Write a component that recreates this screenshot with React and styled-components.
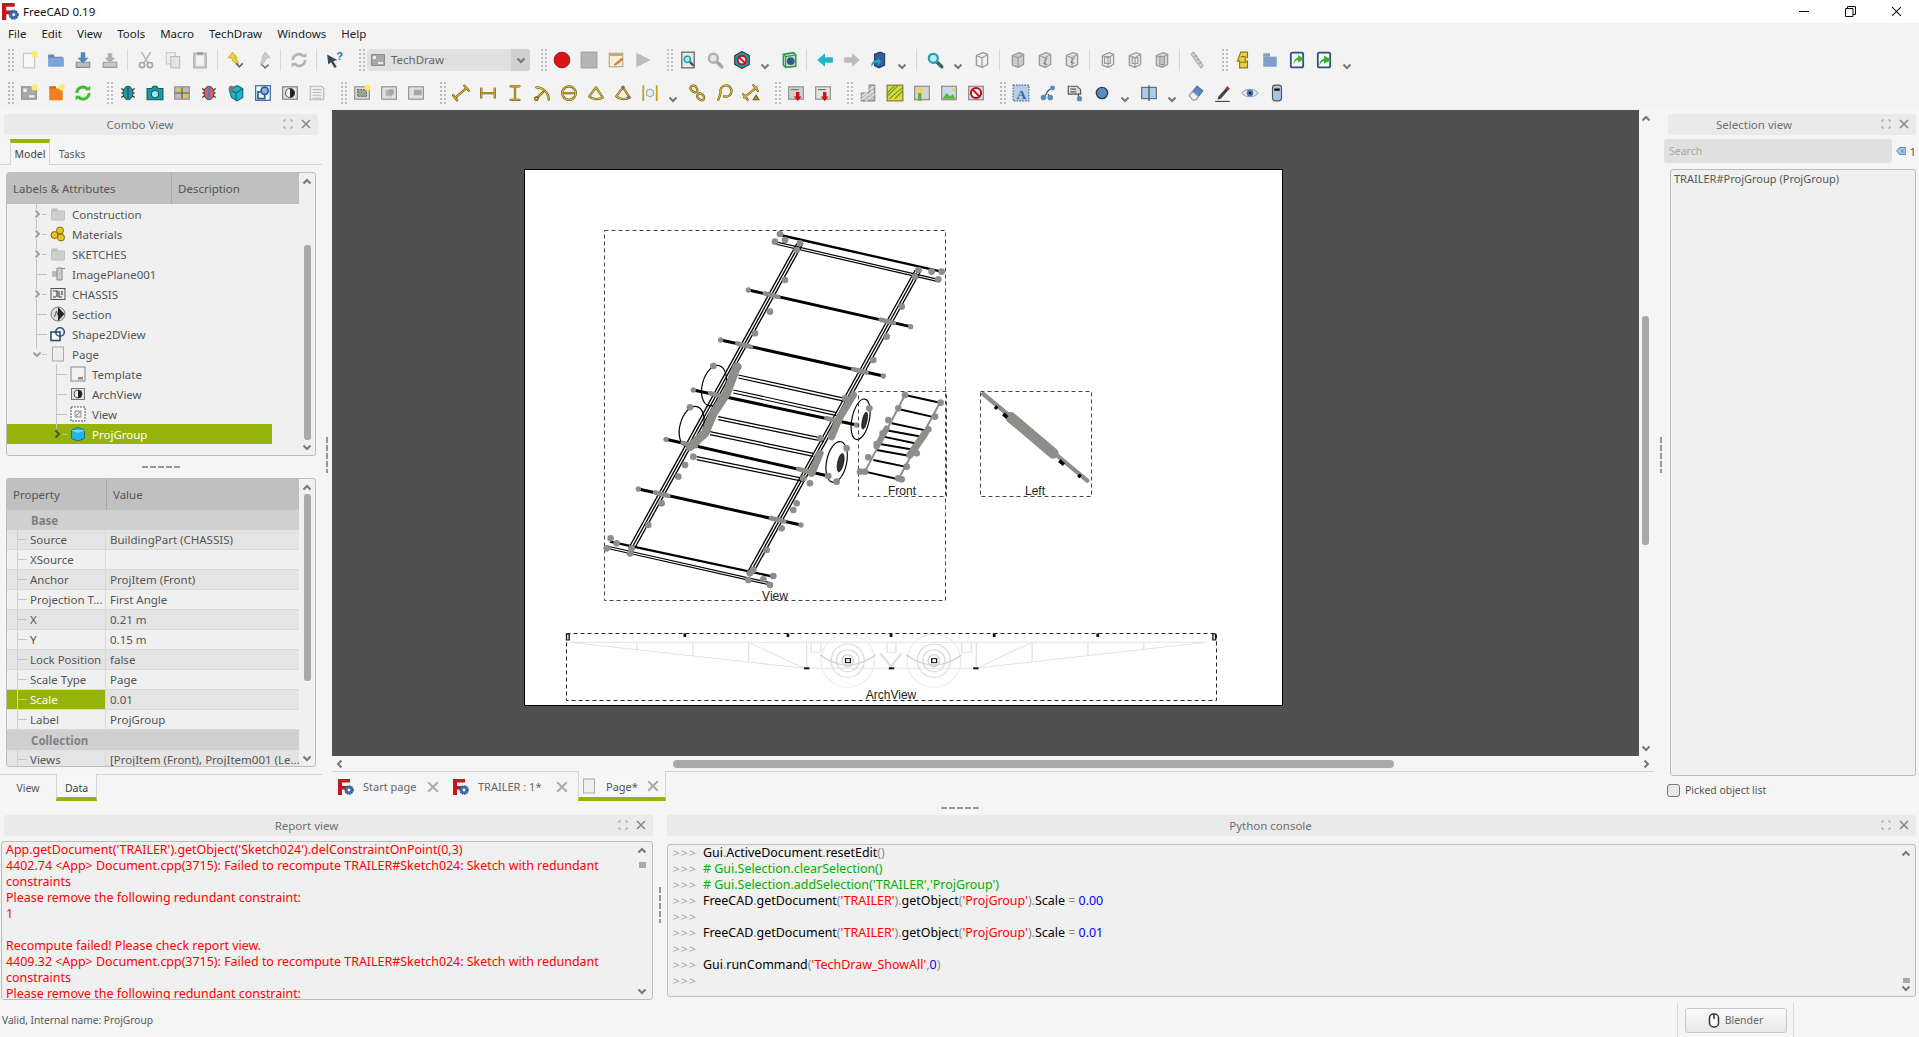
import React from "react";
import styled, { createGlobalStyle } from "styled-components";

const GREEN = "#96b30c";
const UI_FONT = `"Noto Sans", "Open Sans", sans-serif`;

const GlobalStyle = createGlobalStyle`
  html, body { margin: 0; padding: 0; background: #f5f5f5; }
  body { font-family: ${UI_FONT}; font-size: 11.5px; color: #4a4a4a; overflow: hidden; }
  * { box-sizing: border-box; }
`;

// ---- shell

const Shell = styled.div`
  width: 1919px;
  height: 1037px;
  display: flex;
  flex-direction: column;
  overflow: hidden;
  background: #f5f5f5;
`;

const TitleBar = styled.div`
  height: 23px;
  background: #fff;
  display: flex;
  align-items: center;
  padding-left: 2px;
  color: #111;
  font-size: 11.5px;
`;

const TitleText = styled.span`
  margin-left: 4px;
`;

const WinButtons = styled.div`
  margin-left: auto;
  display: flex;
`;

const WinButton = styled.div`
  width: 46px;
  height: 23px;
  display: flex;
  align-items: center;
  justify-content: center;
`;

const MenuBar = styled.div`
  height: 21px;
  background: #f3f3f3;
  display: flex;
  align-items: center;
  gap: 15px;
  padding-left: 8px;
  color: #222;
  font-size: 11.5px;
`;

const ToolRow = styled.div`
  height: 33px;
  background: #f3f3f3;
  display: flex;
  align-items: center;
  padding: 0 0 2px 7px;
`;

const Grip = styled.div`
  width: 8px;
  height: 24px;
  flex: none;
  margin-left: ${(p) => (p.$first ? 0 : "10px")};
  background-image: radial-gradient(circle, #bdbdbd 1.1px, transparent 1.3px);
  background-size: 4px 4px;
`;

const ToolSlot = styled.div`
  width: 27px;
  flex: none;
  display: flex;
  justify-content: center;
  align-items: center;
`;

const ToolSep = styled.div`
  width: 1px;
  height: 22px;
  flex: none;
  margin: 0 4px;
  background: #d6d6d6;
`;

const ToolDrop = styled.div`
  width: 20px;
  flex: none;
  align-self: flex-end;
  padding-bottom: 4px;
  display: flex;
  justify-content: center;
`;

const WorkbenchCombo = styled.div`
  width: 163px;
  height: 22px;
  flex: none;
  margin-left: 1px;
  background: #e0e0e0;
  border-radius: 3px;
  display: flex;
  align-items: center;
  padding-left: 3px;
  color: #666;
  font-size: 11.5px;
  gap: 5px;
`;

const ComboArrow = styled.div`
  margin-left: auto;
  width: 19px;
  height: 22px;
  background: #d0d0d0;
  border-radius: 0 3px 3px 0;
  display: flex;
  align-items: center;
  justify-content: center;
`;

const TopRow = styled.div`
  height: 691px;
  display: flex;
`;

// ---- docks

const LeftDock = styled.div`
  width: 332px;
  flex: none;
  display: flex;
  flex-direction: column;
  position: relative;
`;

const DockTitleBar = styled.div`
  height: 21px;
  flex: none;
  margin: ${(p) => p.$margin || 0};
  padding-right: ${(p) => p.$inset}px;
  background: #eaeaea;
  border-radius: 3px;
  display: flex;
  align-items: center;
  justify-content: center;
  color: #707070;
  position: relative;
`;

const DockIcons = styled.div`
  position: absolute;
  right: 7px;
  top: 5px;
  display: flex;
  gap: 8px;
`;

const TabStrip = styled.div`
  height: ${(p) => p.$h}px;
  flex: none;
  display: flex;
  margin: ${(p) => (p.$bottom ? "7px 10px 0 0" : "0 10px 0 0")};
  padding: ${(p) => (p.$bottom ? "0" : "4px 0 0 10px")};
  border-${(p) => (p.$bottom ? "top" : "bottom")}: 1px solid #d4d4d4;
  font-size: 10.5px;
`;

const SideTab = styled.div`
  width: ${(p) => p.$w}px;
  flex: none;
  display: flex;
  align-items: center;
  justify-content: center;
  color: ${(p) => (p.$active ? "#444" : "#555")};
  ${(p) => p.$active && `
    background: #f6f6f6;
    border-left: 1px solid #d4d4d4;
    border-right: 1px solid #d4d4d4;
    margin-bottom: ${p.$bottom ? 0 : "-1px"};
    margin-top: ${p.$bottom ? "-1px" : 0};
    padding-top: ${p.$bottom ? "4px" : 0};
    border-${p.$bottom ? "bottom" : "top"}: 4px solid ${GREEN};
  `}
  ${(p) => !p.$active && !p.$bottom && "padding-top: 4px;"}
`;

const Panel = styled.div`
  height: ${(p) => p.$h}px;
  flex: none;
  margin: ${(p) => p.$margin};
  display: flex;
  background: #f0f0f0;
  border: 1px solid #bcbcbc;
  border-radius: 3px;
  overflow: hidden;
`;

const PanelBody = styled.div`
  flex: 1;
  min-width: 0;
  overflow: hidden;
`;

const HeaderRow = styled.div`
  height: 31px;
  display: flex;
  background: #c0c0c0;
  color: #555;
`;

const HeaderCell = styled.div`
  width: ${(p) => (p.$w ? `${p.$w}px` : "auto")};
  flex: ${(p) => (p.$w ? "none" : 1)};
  display: flex;
  align-items: center;
  padding-left: 6px;
  border-right: ${(p) => (p.$w ? "1px solid #a9a9a9" : "none")};
`;

const TreeRow = styled.div`
  height: 20px;
  width: 265px;
  display: flex;
  align-items: center;
  gap: 6px;
  position: relative;
  padding-left: ${(p) => p.$pad}px;
  color: ${(p) => (p.$selected ? "#fff" : "#555")};
  background: ${(p) => (p.$selected ? GREEN : "transparent")};
  &::before {
    content: "";
    position: absolute;
    left: ${(p) => p.$line}px;
    top: 0;
    height: ${(p) => (p.$last ? "10px" : "20px")};
    border-left: 1px solid #c4c4c4;
  }
  &::after {
    content: "";
    position: absolute;
    left: ${(p) => p.$line}px;
    top: 10px;
    width: 11px;
    border-top: 1px solid #c4c4c4;
  }
`;

const Expander = styled.div`
  position: absolute;
  left: ${(p) => p.$line - 4}px;
  top: 5px;
  z-index: 1;
  display: flex;
  background: ${(p) => (p.$selected ? GREEN : "#f0f0f0")};
`;

const VScroll = styled.div`
  width: ${(p) => p.$w || 16}px;
  flex: none;
  display: flex;
  flex-direction: column;
  align-items: center;
  padding: 4px 0 3px;
`;

const HScroll = styled.div`
  height: 15px;
  flex: none;
  display: flex;
  align-items: center;
  padding: 0 3px;
`;

const Thumb = styled.div`
  width: ${(p) => p.$w || 7}px;
  height: ${(p) => p.$h}px;
  margin-top: ${(p) => p.$top}px;
  background: #a9a9a9;
  border-radius: ${(p) => (p.$square ? 0 : "3px")};
  flex: none;
`;

const HThumb = styled.div`
  height: 8px;
  width: 721px;
  margin-left: 328px;
  background: #a9a9a9;
  border-radius: 4px;
`;

const ScrollEnd = styled.div`
  margin-${(p) => p.$side || "top"}: auto;
  display: flex;
`;

const SplitterH = styled.div`
  height: ${(p) => p.$h}px;
  flex: none;
  display: flex;
  align-items: center;
  padding-left: ${(p) => p.$pad || 0}px;
`;

const DashH = styled.div`
  width: ${(p) => p.$w}px;
  height: 2px;
  background: repeating-linear-gradient(90deg, #999 0 6px, transparent 6px 8px);
`;

const SplitterV = styled.div`
  width: ${(p) => p.$w}px;
  flex: none;
  display: flex;
  align-items: flex-start;
  justify-content: center;
  padding-top: ${(p) => p.$top || 0}px;
`;

const DashV = styled.div`
  width: 2px;
  height: 36px;
  background: repeating-linear-gradient(180deg, #999 0 6px, transparent 6px 8px);
`;

const LeftSplit = styled.div`
  position: absolute;
  left: 326px;
  top: 327px;
`;

const PropRow = styled.div`
  height: 20px;
  display: grid;
  grid-template-columns: 99px 1fr;
  background: ${(p) => (p.$alt ? "#e4e4e4" : "#f0f0f0")};
  border-bottom: 1px solid #d9d9d9;
  color: #555;
`;

const PropName = styled.div`
  display: flex;
  align-items: center;
  padding-left: 23px;
  white-space: nowrap;
  overflow: hidden;
  border-right: 1px solid #d9d9d9;
  position: relative;
  background: ${(p) => (p.$selected ? GREEN : "transparent")};
  color: ${(p) => (p.$selected ? "#fff" : "inherit")};
  &::before {
    content: "";
    position: absolute;
    left: 10px;
    top: 9px;
    width: 10px;
    border-top: 1px solid #c4c4c4;
  }
  &::after {
    content: "";
    position: absolute;
    left: 10px;
    top: 0;
    height: 20px;
    border-left: 1px solid #d0d0d0;
  }
`;

const PropValue = styled.div`
  display: flex;
  align-items: center;
  padding-left: 4px;
  white-space: nowrap;
  overflow: hidden;
`;

const PropCategory = styled.div`
  height: 20px;
  display: flex;
  align-items: center;
  padding-left: 24px;
  background: #d0d0d0;
  color: #808080;
  font-weight: 700;
`;

// ---- centre

const CenterColumn = styled.div`
  width: 1322px;
  flex: none;
  display: flex;
  flex-direction: column;
`;

const ViewRow = styled.div`
  height: 646px;
  flex: none;
  display: flex;
`;

const Viewport = styled.div`
  width: 1307px;
  flex: none;
  background: #505050;
  padding: 60px 0 0 193px;
`;

const SheetPage = styled.svg`
  display: block;
  width: 757px;
  height: 535px;
  background: #fff;
  box-shadow: 0 0 0 1px #000;
`;

const DocTabs = styled.div`
  height: 30px;
  flex: none;
  display: flex;
  border-top: 1px solid #d4d4d4;
  font-size: 11px;
`;

const DocTab = styled.div`
  width: ${(p) => p.$w}px;
  flex: none;
  display: flex;
  align-items: center;
  padding: 0 ${(p) => p.$right}px 0 ${(p) => p.$left}px;
  color: #666;
  ${(p) => p.$active && `
    background: #f6f6f6;
    border-left: 1px solid #d4d4d4;
    border-right: 1px solid #d4d4d4;
    border-bottom: 4px solid ${GREEN};
    margin-top: -1px;
    padding-top: 4px;
    color: #555;
  `}
`;

const DocTabLabel = styled.span`
  margin-left: ${(p) => p.$gap}px;
`;

const DocTabClose = styled.span`
  margin-left: auto;
  display: flex;
`;

// ---- right dock

const RightDock = styled.div`
  flex: 1;
  min-width: 0;
  display: flex;
  flex-direction: column;
  padding: 4px 3px 0 0;
`;

const SearchRow = styled.div`
  height: 24px;
  flex: none;
  margin: 4px 0 6px -4px;
  display: flex;
  align-items: center;
  overflow: hidden;
`;

const SearchField = styled.div`
  width: 228px;
  height: 24px;
  flex: none;
  background: #e0e0e0;
  border-radius: 3px;
  padding-left: 5px;
  display: flex;
  align-items: center;
  color: #a8a8a8;
  font-size: 10.5px;
`;

const SearchCount = styled.span`
  margin-left: 3px;
  color: #555;
`;

const SelectionList = styled.div`
  height: 607px;
  flex: none;
  margin-left: 2px;
  background: #f0f0f0;
  border: 1px solid #bcbcbc;
  border-radius: 3px;
  padding: 1px 3px;
  color: #555;
  font-size: 11px;
`;

const PickedRow = styled.label`
  display: flex;
  align-items: center;
  gap: 5px;
  margin: 7px 0 0 -1px;
  color: #555;
  font-size: 10.4px;
`;

const CheckBox = styled.span`
  width: 13px;
  height: 13px;
  border: 1px solid #777;
  border-radius: 3px;
  background: #e8e8e8;
`;

// ---- bottom

const BottomRow = styled.div`
  height: 188px;
  flex: none;
  display: flex;
`;

const BottomDock = styled.div`
  flex: none;
  width: ${(p) => p.$w}px;
  display: flex;
  flex-direction: column;
`;

const ConsoleText = styled.div`
  flex: 1;
  min-width: 0;
  padding: ${(p) => p.$pad};
  line-height: 16px;
  font-size: 12.45px;
  overflow: hidden;
  color: ${(p) => p.$color || "#000"};
`;

const ConsoleLine = styled.div`
  height: 16px;
  white-space: nowrap;
  display: flex;
`;

const Prompt = styled.span`
  width: 30px;
  flex: none;
  color: #a0a0a0;
  font-size: 11.5px;
  letter-spacing: 1.5px;
`;

const Tok = styled.span`
  white-space: pre;
  color: ${(p) => ({ s: "#f00", c: "#00b000", n: "#00f", p: "#8a8a8a" }[p.$t] || "#000")};
`;

const StatusBar = styled.div`
  height: 34px;
  flex: none;
  display: flex;
  align-items: center;
  padding-left: 2px;
  color: #555;
  font-size: 10.2px;
`;

const StatusCell = styled.div`
  margin-left: auto;
  margin-right: 125px;
  height: 34px;
  width: 117px;
  border-left: 1px solid #d8d8d8;
  border-right: 1px solid #d8d8d8;
  display: flex;
  align-items: center;
  justify-content: center;
`;

const NavButton = styled.div`
  width: 102px;
  height: 25px;
  border: 1px solid #c8c8c8;
  border-radius: 3px;
  background: linear-gradient(#fafafa, #e9e9e9);
  display: flex;
  align-items: center;
  justify-content: center;
  gap: 5px;
  color: #666;
  font-size: 10.5px;
`;

// ---- icons

const Gold = ({ d }) => (
  <>
    <path d={d} fill="none" stroke="#6a5612" strokeWidth="2" strokeLinecap="round" strokeLinejoin="round" />
    <path d={d} fill="none" stroke="#e2c23c" strokeWidth=".9" strokeLinecap="round" strokeLinejoin="round" />
  </>
);

const Star = () => <circle cx="13" cy="3" r="2.5" fill="#fff04a" stroke="#f2e6a0" strokeWidth=".6" />;

const Cube = ({ fill = "#c8c8c8", stroke = "#9a9a9a", inner }) => (
  <>
    <path d="M3 4l6-2.500 4 1.500v9l-5 2.500-5-2z" fill={fill} stroke={stroke} strokeWidth="1.200" strokeLinejoin="round" />
    <path d="M3 4l5 2 5-3M8 6v8.500" fill="none" stroke={stroke} strokeWidth="1" />
    {inner}
  </>
);

const GrayPage = ({ children, fill = "#c9c9c9" }) => (
  <>
    <rect x="1.500" y="2.500" width="13" height="11" fill={fill} stroke="#8c8c8c" />
    {children}
  </>
);

const Mag = ({ c = "#1aa7b0", x = 0, y = 0 }) => (
  <g transform={`translate(${x} ${y})`}>
    <path d="M9.500 9.500L14 14" stroke="#3c5f66" strokeWidth="3" strokeLinecap="round" />
    <circle cx="6.500" cy="6.500" r="4" fill="#bfeaf0" stroke={c} strokeWidth="2" />
  </g>
);

const Bug = ({ a, b }) => (
  <>
    <path d="M2 4l12 8M2 8h12M2 12l12-8" stroke="#333" strokeWidth="1" />
    <ellipse cx="8" cy="8" rx="4.500" ry="6" fill={a} stroke="#333" strokeWidth=".8" />
    <path d="M8 2v12" stroke={b} strokeWidth="1.600" />
  </>
);

const ICONS = {
  new: (<><rect x="3" y="2" width="10" height="13" fill="#f7f7f7" stroke="#c4c4c4" /><Star /></>),
  open: (<><path d="M1 3h5l1 2h7v3H1z" fill="#6a87ab" /><path d="M1 6h14v8H1z" fill="#7da5d6" /></>),
  save: (<><path d="M2 10h12v4.500H2z" fill="#b9bfc4" stroke="#8c8c8c" /><path d="M6 1h4v5h3l-5 5-5-5h3z" fill="#5588b8" /></>),
  saveAs: (<><path d="M2 10h12v4.500H2z" fill="#c8c8c8" stroke="#9a9a9a" /><path d="M6 2h4v4h3l-5 4.500L3 6h3z" fill="#b0b0b0" /></>),
  cut: (<><path d="M4 1l6 10M12 1L6 11" stroke="#bababa" strokeWidth="1.600" /><circle cx="4.500" cy="12.500" r="2.300" fill="none" stroke="#a5a5a5" strokeWidth="1.500" /><circle cx="11.500" cy="12.500" r="2.300" fill="none" stroke="#a5a5a5" strokeWidth="1.500" /></>),
  copy: (<><rect x="2" y="1.500" width="8" height="10" fill="#eee" stroke="#c8c8c8" /><rect x="6" y="5" width="8" height="10" fill="#e4e4e4" stroke="#bcbcbc" /></>),
  paste: (<><rect x="2.500" y="2" width="11" height="13" fill="#d0d0d0" stroke="#a8a8a8" /><rect x="4.500" y="4" width="7" height="9" fill="#f2f2f2" /><rect x="5.500" y="1" width="5" height="2.500" fill="#9c9c9c" /></>),
  undo: (<><path d="M5 1L1 6h3c1 4 4 5 6 7 .5-3-1-6-3-7h2z" fill="#f0cf30" stroke="#b09620" strokeWidth=".6" /><path d="M8 11l3 3 3-3" fill="none" stroke="#666" strokeWidth="1.500" /></>),
  redo: (<><path d="M10 1l4 5h-3c-1 4-3 5-5 7-.5-3 1-6 3-7H7z" fill="#cfcfcf" stroke="#a5a5a5" strokeWidth=".6" /><path d="M7 12l3 3 3-3" fill="none" stroke="#777" strokeWidth="1.500" /></>),
  refresh: (<><path d="M2.500 8a5.500 5.500 0 0 1 9.500-3.500M13.500 8a5.500 5.500 0 0 1-9.500 3.500" fill="none" stroke="#b4b4b4" strokeWidth="2.400" /><path d="M9.500 5.500h5v-4zM6.500 10.500h-5v4z" fill="#b4b4b4" /></>),
  greenRefresh: (<><path d="M2.500 8a5.500 5.500 0 0 1 9.500-3.500M13.500 8a5.500 5.500 0 0 1-9.500 3.500" fill="none" stroke="#3cbf2f" strokeWidth="2.600" /><path d="M9.500 5.500h5v-4zM6.500 10.500h-5v4z" fill="#3cbf2f" /></>),
  whats: (<><path d="M1 3l9 5-3.500 1 3 5-2 1-3-5L2 12z" fill="#3a4a55" /><text x="9" y="8" fontSize="10" fontWeight="700" fontFamily="Liberation Sans" fill="#3f6fa8">?</text></>),
  record: <circle cx="8" cy="8" r="7" fill="#d81418" stroke="#a40e10" strokeWidth=".8" />,
  stop: <rect x="1" y="1" width="14" height="14" fill="#b4b4b4" stroke="#a0a0a0" />,
  macro: (<><rect x="2" y="2" width="12" height="12" fill="#f4f0dc" stroke="#b0a880" /><path d="M2 3.500h12" stroke="#c8a050" strokeWidth="1.600" /><path d="M6 12l7-6 1.500 1.500-7 5.500z" fill="#e07a20" /></>),
  play: <path d="M2 1.500L15 8 2 14.500z" fill="#bcbcbc" />,
  fit: (<><rect x="2.500" y="1" width="11" height="14" fill="#e8e8e8" stroke="#555" /><g transform="translate(3 3) scale(.68)"><Mag /></g></>),
  fitSel: (<><path d="M9.500 9.500L14 14" stroke="#a5a5a5" strokeWidth="3" strokeLinecap="round" /><circle cx="6.500" cy="6.500" r="4" fill="#e6e6e6" stroke="#b2b2b2" strokeWidth="2.200" /></>),
  style: (<><path d="M8 .5l6.500 3.500v8L8 15.500 1.500 12V4z" fill="#1d9aa3" stroke="#2d3d40" /><circle cx="8" cy="8" r="3.800" fill="#d9e8ea" stroke="#c81018" strokeWidth="1.600" /><path d="M5.500 5.500l5 5" stroke="#c81018" strokeWidth="1.600" /></>),
  bbox: (<><path d="M3 3l9-1.500 2 2v10l-9 1-2-2z" fill="#cfd8d0" stroke="#22a040" strokeWidth="1.400" /><path d="M3 3l2 2v9M5 5l9-1.500" fill="none" stroke="#22a040" /><circle cx="9.500" cy="9" r="3.400" fill="#2f5a90" /></>),
  back: <path d="M1 8l7-6v3.500h7v5H8V14z" fill="#1fb8c8" />,
  fwd: <path d="M15 8L8 2v3.500H1v5h7V14z" fill="#bcbcbc" />,
  tree: (<><path d="M4 3l5-2 4 1.500v10L8 15 4 13z" fill="#305f9a" stroke="#1d3f6c" /><path d="M1 14c0-4 2-6 6-6V6l3 3.500-3 3V10c-3 0-4 2-6 4z" fill="#27a5c0" /></>),
  zoom: <Mag />,
  iso: <Cube fill="#efefef" />,
  front: <Cube fill="#cbcbcb" inner={<path d="M5 5v8" stroke="#cbcbcb" />} />,
  top: <Cube fill="#dcdcdc" inner={<path d="M10 6l-3 5 3 1" fill="none" stroke="#888" />} />,
  right: <Cube fill="#e2e2e2" inner={<path d="M10 11l-3-1 3-4" fill="none" stroke="#888" />} />,
  rear: <Cube fill="#ececec" inner={<rect x="5" y="5" width="5" height="6" fill="none" stroke="#999" />} />,
  bottom: <Cube fill="#e8e8e8" inner={<rect x="5.500" y="6" width="5" height="5" fill="none" stroke="#999" />} />,
  left: <Cube fill="#d8d8d8" inner={<rect x="6" y="5" width="4" height="7" fill="#c4c4c4" stroke="#999" />} />,
  ruler: (<><path d="M4 1l8.500 12-2 2L2 3z" fill="#d8d8d8" stroke="#aaa" /><path d="M5 5l2-1M7 8l2-1M9 11l2-1" stroke="#999" /></>),
  part: (<><path d="M6 1h6v5h-2v3h2v6H5V9H3z" fill="#ead03a" stroke="#8a7410" /><path d="M6 5h4M5 10h6" stroke="#8a7410" /></>),
  folder: (<><path d="M2 2h6v3H2z" fill="#9a9a9a" /><path d="M2 5h12v9H2z" fill="#7e9fc8" /></>),
  link: (<><rect x="2.500" y="1.500" width="11" height="13" rx="1.500" fill="#f6f6f6" stroke="#2b527f" strokeWidth="1.600" /><path d="M5 12c0-4 2-6 4-6V3.500L14 7l-5 3.500V8c-2 0-3 1.500-4 4z" fill="#3caf30" /></>),
  link2: (<><rect x="2.500" y="1.500" width="11" height="13" rx="1.500" fill="#f6f6f6" stroke="#2b527f" strokeWidth="1.600" /><path d="M4 13c0-4 2-6 4-6V4l7 4-7 3V9c-2 0-3 1.500-4 4z" fill="#3caf30" /></>),
  tdPage: (<GrayPage fill="#a8a8a8"><path d="M3 4h3v3H3zM8 10h5v2H8z" fill="#eee" /><Star /></GrayPage>),
  comboPage: (<GrayPage fill="#a8a8a8"><path d="M3 4h3v3H3zM8 10h5v2H8z" fill="#eee" /></GrayPage>),
  orangeFolder: (<><path d="M2 2h6v3H2z" fill="#d06a10" /><path d="M2 4h12v10.500H2z" fill="#f0801c" /><Star /></>),
  bugTeal: <Bug a="#1c98a4" b="#0f6a75" />,
  camera: (<><path d="M1 4h4l1.500-2h3L11 4h4v10H1z" fill="#1c98a4" stroke="#0f5a62" /><circle cx="8" cy="9" r="3.200" fill="#a0e4ea" stroke="#0f5a62" /></>),
  template: (<GrayPage fill="#bdbdbd"><rect x="4" y="4.500" width="3.500" height="3" fill="#e8c820" /><rect x="9" y="9" width="3.500" height="3" fill="#e8c820" /><path d="M8 3v10M2 8h12" stroke="#555" /></GrayPage>),
  bugRed: <Bug a="#d86060" b="#4a80c0" />,
  cubeTeal: (<><path d="M2 5l7-3.500 5 2.500v8l-5 3-5-3z" fill="#20b4cc" stroke="#0d6a78" /><path d="M2 5l6 3 6-4M8 8v7" fill="none" stroke="#0d6a78" /><circle cx="4" cy="4" r="2.500" fill="#777" /></>),
  shape: (<><rect x="1.500" y="1.500" width="13" height="13" fill="#f4f4f4" stroke="#2b5f98" /><rect x="3.500" y="7" width="6" height="6" fill="none" stroke="#2b5f98" strokeWidth="1.500" /><circle cx="9.500" cy="6" r="3.200" fill="#8cb4e0" stroke="#2b5f98" strokeWidth="1.500" /></>),
  arch: (<><rect x="1.500" y="2.500" width="13" height="11" fill="#e2e2e2" stroke="#777" /><circle cx="8" cy="8" r="4" fill="#f4f4f4" stroke="#555" /><path d="M8 4a4 4 0 0 1 0 8z" fill="#222" /></>),
  table: (<><path d="M2 2h10l2 2v10H2z" fill="#f2f2f2" stroke="#b5b5b5" /><path d="M4 5h8M4 7.500h8M4 10h8M4 12.500h8" stroke="#bbb" /></>),
  viewNew: (<GrayPage fill="#dcdcdc"><rect x="4" y="5" width="8" height="6" fill="#9aa68a" stroke="#666" strokeDasharray="1.500 1" /><Star /></GrayPage>),
  view2: (<GrayPage fill="#e2e2e2"><path d="M5 5h6v6H5z" fill="#b5b5b5" /><circle cx="10" cy="7" r="2.500" fill="#a5a5a5" /></GrayPage>),
  view3: (<GrayPage fill="#e2e2e2"><path d="M6 5h7v5H6z" fill="#a5a5a5" /></GrayPage>),
  dimLen: <Gold d="M2.500 12.500L13 3.500M1 10l3.500 4.500M11 1.500L15 6" />,
  dimH: <Gold d="M2 4v8M14 4v8M3 8h10" />,
  dimV: <Gold d="M4 2h8M4 14h8M8 3v10" />,
  dimR: (<><Gold d="M3 3c6 0 11 5 11 11M3 13l6-6" /><circle cx="3" cy="13" r="1.600" fill="#e2c23c" stroke="#6a5612" /></>),
  dimD: <Gold d="M8 2a6 6 0 1 0 .01 0M3 8h10" />,
  dimA: <Gold d="M8 3L2 11c3 3 9 3 12 1z" />,
  dimA3: (<><Gold d="M8 3L2 11c3 3 9 3 12 1z" /><circle cx="8" cy="3" r="1.600" fill="#777" /><circle cx="13" cy="12" r="1.600" fill="#777" /></>),
  dim3d: (<><path d="M2 1v14M14 1v14" stroke="#c0a430" strokeWidth="1.600" /><path d="M5 6l3-1.500L11 6v4l-3 1.500L5 10z" fill="#e8eef0" stroke="#9aa" /></>),
  chain: <Gold d="M3 2c-2 2 0 4 2 5s4 0 3-3-4-3-5-2zM9 9c-2 2 0 4 2 5s4 0 3-3-4-3-5-2z" />,
  loop: <Gold d="M3 14l2-6a5 5 0 1 1 3 3" />,
  dimTri: (<><Gold d="M2 12L13 3M1 9l4 5M10 1l4 5" /><path d="M10 14l2.500-4 2.500 4z" fill="#c8a020" stroke="#6a5612" /></>),
  expSvg: (<GrayPage fill="#d0d0d0"><path d="M8 7h3v4h2l-3.500 4L6 11h2z" fill="#cc1414" /><path d="M3.500 5h7" stroke="#777" /></GrayPage>),
  expDxf: (<GrayPage fill="#e4e4e4"><path d="M8 7h3v4h2l-3.500 4L6 11h2z" fill="#cc1414" /><path d="M3.500 5h7" stroke="#666" /></GrayPage>),
  hatch: (<><path d="M9 1h5v14H2V8h7z" fill="#bcbcbc" stroke="#888" /><path d="M2 11l5-3M2 14l11-8M6 15l8-6M9 5l5-3" stroke="#e8e8e8" /></>),
  hatchY: (<><rect x="1" y="1" width="14" height="14" fill="#e8d43a" stroke="#7a7a30" /><path d="M1 8l7-7M1 11l10-10M3 13L15 3M8 13l7-7" stroke="#52a030" /></>),
  person: (<><rect x="1.500" y="2" width="13" height="12" fill="#d4d4d4" stroke="#888" /><circle cx="6" cy="5.500" r="2.500" fill="#f0d840" /><rect x="4.500" y="8" width="3" height="7" fill="#64b040" /></>),
  photo: (<><rect x="1.500" y="2" width="13" height="12" fill="#c6dcea" stroke="#888" /><path d="M2 13l4-5 3 3 2-2 3 4z" fill="#60b030" /><circle cx="12" cy="5" r="1.500" fill="#f0d840" /></>),
  noImg: (<><rect x="1.500" y="2" width="13" height="12" fill="#d8d8d8" stroke="#888" /><circle cx="8" cy="8" r="4.500" fill="#f4f4f4" stroke="#b81018" strokeWidth="1.800" /><path d="M5 5l6 6" stroke="#b81018" strokeWidth="1.800" /></>),
  annot: (<><rect x="1" y="1" width="14" height="14" fill="#b8cce4" stroke="#3f6fb0" strokeDasharray="1.500 1" /><text x="4" y="13" fontSize="12" fontWeight="700" fontFamily="Liberation Serif" fill="#2f5f9f">A</text></>),
  balloons: (<><path d="M4 13l4-7M8 6l4-3M8 9l2 4" stroke="#444" /><circle cx="4" cy="12" r="2.500" fill="#5b8cc0" /><circle cx="12" cy="3.500" r="2.200" fill="#5b8cc0" /><circle cx="10" cy="12" r="2.500" fill="#5b8cc0" /></>),
  note: (<><path d="M2 2h8l3 3v4H2z" fill="#ddd" stroke="#555" /><path d="M4 4.500h5M4 7h5" stroke="#555" /><path d="M11 9v3" stroke="#444" /><circle cx="12" cy="13" r="2.300" fill="#5b8cc0" /></>),
  dot: <circle cx="8" cy="8" r="5" fill="#5b8cc0" stroke="#2d3b48" strokeWidth="1.200" />,
  section: (<><rect x="1.500" y="3" width="13" height="10" fill="#a8cdec" stroke="#666" /><path d="M8 1v14" stroke="#555" strokeWidth="1.200" /></>),
  eraser: (<><path d="M2 10l7-8 5 4-6 8H5z" fill="#5b8cc8" stroke="#3c6a9c" /><path d="M2 10l3 4h3l2-3-5-4z" fill="#f4f4f4" stroke="#aaa" /></>),
  pen: (<><path d="M4 11l8-9 2 2-8 9-3 1z" fill="#444" /><path d="M11 3l2 2" stroke="#c03030" strokeWidth="2" /><path d="M1 15.500h13" stroke="#444" /></>),
  eye: (<><path d="M1 8c3-4.500 11-4.500 14 0-3 4.500-11 4.500-14 0z" fill="#e8eef4" stroke="#90a8c0" /><circle cx="8" cy="8" r="3" fill="#4a78b0" /><circle cx="8" cy="8" r="1.200" fill="#123" /></>),
  pill: (<><rect x="4" y="1" width="8" height="14" rx="2.500" fill="#a8c4e4" stroke="#555" /><rect x="5.500" y="4" width="5" height="2" fill="#111" /></>),
  // tree items
  treeFolder: (<><path d="M1.500 2.500h6v3h-6z" fill="#bcbcbc" /><path d="M1.500 5h13v9h-13z" fill="#cfcfcf" stroke="#c0c0c0" /></>),
  materials: (<><circle cx="10" cy="4.500" r="3.500" fill="#e8c428" stroke="#806c10" /><circle cx="4.500" cy="9" r="3.500" fill="#e8c428" stroke="#806c10" /><circle cx="11" cy="11.500" r="3.500" fill="#e8c428" stroke="#806c10" /></>),
  plane: (<><path d="M7 2h5v12H7z" fill="#ccc" stroke="#888" /><path d="M12 2.500h3M2 6h5M2 8h5M2 10h5" stroke="#888" /></>),
  chassis: (<><rect x="1" y="2.500" width="14" height="11" fill="#eaeaea" stroke="#555" /><path d="M3 5h4v6M6 11H3M9 5v6h3M12 5v4" fill="none" stroke="#444" strokeWidth="1.200" /></>),
  sectionTree: (<><circle cx="8" cy="8" r="7" fill="#ddd" stroke="#777" /><path d="M8 1l6.500 7L8 15z" fill="#222" /><path d="M4.500 11L6.500 5l2 6" fill="none" stroke="#555" /></>),
  shapeTree: (<><rect x="1" y="6" width="9" height="8.500" fill="#fff" stroke="#2a4e78" strokeWidth="1.600" /><circle cx="10" cy="6" r="4.300" fill="none" stroke="#2a4e78" strokeWidth="1.600" /></>),
  pageTree: <rect x="2.500" y="1" width="11" height="14" fill="#eeeeea" stroke="#aaa" />,
  templateTree: (<><rect x="1" y="1" width="14" height="14" fill="#f2f2f2" stroke="#888" /><rect x="8" y="11" width="5" height="2.500" fill="#888" /></>),
  viewTree: (<><rect x="1" y="1" width="14" height="14" fill="#fff" stroke="#555" strokeDasharray="2 1" /><path d="M5 5h6v6H5z" fill="#e8e8e8" stroke="#888" /><path d="M6 10l4-4" stroke="#888" /></>),
  cubeCyan: (<><path d="M1.500 4L8 1.500 14.500 4v8.500L8 15l-6.500-2.500z" fill="#29b4e0" stroke="#17718f" /><path d="M1.500 4L8 6.500 14.500 4" fill="#7ad4f0" stroke="#7ad4f0" /></>),
  logo: (<><path d="M0 0h12v3.500H4V7h6v3.500H4V16H0z" fill="#c8141c" /><circle cx="11" cy="11" r="4" fill="#3b6fb0" stroke="#2f5d9a" strokeWidth="1.600" strokeDasharray="1.500 .8" /><circle cx="11" cy="11" r="1.400" fill="#f3f3f3" /></>),
};

const Icon = ({ name, size = 18 }) => (
  <svg width={size} height={size} viewBox="0 0 16 16">
    {ICONS[name]}
  </svg>
);

const Chevron = ({ dir = "down", size = 10, color = "#777", weight = 2 }) => {
  const d = {
    down: "M1.500 3.500L5 7l3.500-3.500",
    up: "M1.500 6.500L5 3l3.500 3.500",
    left: "M6.500 1.500L3 5l3.500 3.500",
    right: "M3.500 1.500L7 5 3.500 8.500",
  }[dir];
  return (
    <svg width={size} height={size} viewBox="0 0 10 10">
      <path d={d} fill="none" stroke={color} strokeWidth={weight} />
    </svg>
  );
};

const CloseX = ({ size = 10, color = "#888", weight = 1.600 }) => (
  <svg width={size} height={size} viewBox="0 0 10 10">
    <path d="M1 1l8 8M9 1l-8 8" stroke={color} strokeWidth={weight} />
  </svg>
);

const FloatMark = () => (
  <svg width="10" height="10" viewBox="0 0 10 10">
    <path d="M1 3V1h2M7 1h2v2M9 7v2H7M3 9H1V7" fill="none" stroke="#a0a0a0" />
  </svg>
);

const DockTitle = ({ children, margin, inset = 42 }) => (
  <DockTitleBar $margin={margin} $inset={inset}>
    {children}
    <DockIcons>
      <FloatMark />
      <CloseX />
    </DockIcons>
  </DockTitleBar>
);

// ---- toolbars. ":" grip, "|" separator, "v" dropdown arrow, "@" workbench combo

const ROW_ONE = [
  ":", "new", "open", "save", "saveAs", "|", "cut", "copy", "paste", "|", "undo", "redo", "|", "refresh", "|", "whats",
  ":", "@", ":", "record", "stop", "macro", "play",
  ":", "fit", "fitSel", "style", "v", "bbox", "|", "back", "fwd", "tree", "v", "|", "zoom", "v", "iso", "|",
  "front", "top", "right", "|", "rear", "bottom", "left", "|", "ruler",
  ":", "part", "folder", "link", "link2", "v",
];

const ROW_TWO = [
  ":", "tdPage", "orangeFolder", "greenRefresh",
  ":", "bugTeal", "camera", "template", "bugRed", "cubeTeal", "shape", "arch", "table",
  ":", "viewNew", "view2", "view3",
  ":", "dimLen", "dimH", "dimV", "dimR", "dimD", "dimA", "dimA3", "dim3d", "v", "chain", "loop", "dimTri",
  ":", "expSvg", "expDxf",
  ":", "hatch", "hatchY", "person", "photo", "noImg",
  ":", "annot", "balloons", "note", "dot", "v", "section", "v", "eraser", "pen", "eye", "pill",
];

const Toolbar = ({ items }) => (
  <ToolRow>
    {items.map((item, i) => {
      if (item === ":") return <Grip key={i} $first={i === 0} />;
      if (item === "|") return <ToolSep key={i} />;
      if (item === "v") return <ToolDrop key={i}><Chevron /></ToolDrop>;
      if (item === "@")
        return (
          <WorkbenchCombo key={i}>
            <Icon name="comboPage" size={16} />
            TechDraw
            <ComboArrow><Chevron /></ComboArrow>
          </WorkbenchCombo>
        );
      return <ToolSlot key={i}><Icon name={item} /></ToolSlot>;
    })}
  </ToolRow>
);

// ---- tree and properties

const TREE = [
  { label: "Construction", icon: "treeFolder", arrow: "right" },
  { label: "Materials", icon: "materials", arrow: "right" },
  { label: "SKETCHES", icon: "treeFolder", arrow: "right" },
  { label: "ImagePlane001", icon: "plane" },
  { label: "CHASSIS", icon: "chassis", arrow: "right" },
  { label: "Section", icon: "sectionTree" },
  { label: "Shape2DView", icon: "shapeTree" },
  { label: "Page", icon: "pageTree", arrow: "down", last: true },
  { label: "Template", icon: "templateTree", child: true },
  { label: "ArchView", icon: "arch", child: true },
  { label: "View", icon: "viewTree", child: true },
  { label: "ProjGroup", icon: "cubeCyan", child: true, arrow: "right", selected: true, last: true },
];

const PROPS = [
  { cat: "Base" },
  { name: "Source", value: "BuildingPart (CHASSIS)" },
  { name: "XSource", value: "" },
  { name: "Anchor", value: "ProjItem (Front)" },
  { name: "Projection T...", value: "First Angle" },
  { name: "X", value: "0.21 m" },
  { name: "Y", value: "0.15 m" },
  { name: "Lock Position", value: "false" },
  { name: "Scale Type", value: "Page" },
  { name: "Scale", value: "0.01", selected: true },
  { name: "Label", value: "ProjGroup" },
  { cat: "Collection" },
  { name: "Views", value: "[ProjItem (Front), ProjItem001 (Le..." },
];

const ModelTree = () => (
  <Panel $h={284} $margin="7px 16px 0 6px">
    <PanelBody>
      <HeaderRow>
        <HeaderCell $w={165}>Labels &amp; Attributes</HeaderCell>
        <HeaderCell>Description</HeaderCell>
      </HeaderRow>
      {TREE.map((t) => {
        const line = t.child ? 49 : 29;
        return (
          <TreeRow key={t.label} $pad={t.child ? 63 : 43} $line={line} $last={t.last} $selected={t.selected}>
            {t.arrow && (
              <Expander $line={line} $selected={t.selected}>
                <Chevron dir={t.arrow} color={t.selected ? "#4b5a06" : "#a0a0a0"} />
              </Expander>
            )}
            <Icon name={t.icon} size={16} />
            {t.label}
          </TreeRow>
        );
      })}
    </PanelBody>
    <VScroll>
      <Chevron dir="up" />
      <Thumb $top={58} $h={195} />
      <ScrollEnd><Chevron /></ScrollEnd>
    </VScroll>
  </Panel>
);

const PropertyTable = () => {
  let alt = true;
  return (
    <Panel $h={289} $margin="0 16px 0 6px">
      <PanelBody>
        <HeaderRow>
          <HeaderCell $w={100}>Property</HeaderCell>
          <HeaderCell>Value</HeaderCell>
        </HeaderRow>
        {PROPS.map((p, i) => {
          if (p.cat) {
            alt = true;
            return <PropCategory key={i}>{p.cat}</PropCategory>;
          }
          const row = (
            <PropRow key={i} $alt={alt}>
              <PropName $selected={p.selected}>{p.name}</PropName>
              <PropValue>{p.value}</PropValue>
            </PropRow>
          );
          alt = !alt;
          return row;
        })}
      </PanelBody>
      <VScroll>
        <Chevron dir="up" />
        <Thumb $top={1} $h={187} />
        <ScrollEnd><Chevron /></ScrollEnd>
      </VScroll>
    </Panel>
  );
};

// ---- the drawing on the sheet, coordinates taken in enlarged units

const DOT = "#8f8d8a";
const BARS = [
  [475, 210, 962, 320],
  [392, 360, 880, 468],
  [310, 510, 800, 615],
  [228, 658, 715, 768],
  [145, 807, 633, 915],
];
const THIN_BARS = [
  [445, 465, 765, 535],
  [430, 510, 740, 578],
  [385, 590, 700, 655],
  [360, 635, 670, 700],
  [320, 710, 640, 775],
];
const RAIL_DOTS = [
  [630, 70], [620, 90], [585, 180], [540, 275], [495, 340], [445, 440], [360, 600], [310, 710], [285, 735], [265, 770], [215, 850], [175, 915], [125, 985], [120, 1000],
  [985, 150], [975, 170], [935, 260], [890, 350], [850, 420], [765, 535], [690, 655], [640, 775], [660, 790], [620, 850], [610, 870], [575, 925], [530, 990], [480, 1060],
  [570, 42], [555, 65], [585, 60], [1055, 155], [1045, 178], [1025, 155], [62, 955], [50, 985], [80, 970], [550, 1068], [540, 1095], [520, 1078], [475, 1080], [490, 1050],
  [370, 438], [300, 562], [838, 565], [770, 685], [740, 785], [715, 768],
];
const FRONT_BARS = [
  [945, 525, 1050, 548], [928, 568, 1025, 590], [905, 610, 1010, 632], [885, 630, 995, 650], [880, 650, 985, 672],
  [870, 672, 975, 690], [860, 690, 960, 708], [850, 720, 945, 740], [825, 755, 925, 778],
];
const FRONT_DOTS = [
  [945, 525], [925, 565], [895, 600], [878, 640], [860, 672], [835, 712], [825, 755], [810, 755], [1052, 548], [1035, 590], [1015, 628], [980, 700], [950, 740], [925, 775], [935, 778],
];

const TrailerPlan = () => (
  <g transform="translate(590 220) scale(.3333)" fill="none" stroke="#000">
    <path d="M570 45L1055 155" strokeWidth="7" />
    <path d="M555 65L1045 178M555 72L1045 185" strokeWidth="3.500" />
    <path d="M60 965L550 1070" strokeWidth="7" />
    <path d="M50 985L540 1095M50 978L540 1088" strokeWidth="3.500" />
    {[-9, 0, 9].map((o) => (
      <g key={o} strokeWidth="4">
        <path d={`M${630 + o} 70L${125 + o} 985`} />
        <path d={`M${985 + o} 150L${480 + o} 1060`} />
      </g>
    ))}
    {BARS.map(([a, b, c, d]) => <path key={a} d={`M${a} ${b}L${c} ${d}`} strokeWidth="9" />)}
    {THIN_BARS.map(([a, b, c, d]) => (
      <path key={a} d={`M${a} ${b}L${c} ${d}M${a} ${b + 9}L${c} ${d + 9}`} strokeWidth="3.500" />
    ))}
    <ellipse cx="372" cy="497" rx="35" ry="62" transform="rotate(15 372 497)" strokeWidth="3.500" />
    <ellipse cx="305" cy="620" rx="35" ry="62" transform="rotate(15 305 620)" strokeWidth="3.500" />
    <ellipse cx="812" cy="598" rx="26" ry="62" transform="rotate(12 812 598)" strokeWidth="3.500" />
    <ellipse cx="740" cy="726" rx="30" ry="62" transform="rotate(12 740 726)" strokeWidth="3.500" />
    <ellipse cx="824" cy="602" rx="7" ry="26" transform="rotate(12 824 602)" fill="#333" strokeWidth="2" />
    <ellipse cx="752" cy="728" rx="9" ry="28" transform="rotate(12 752 728)" fill="#333" strokeWidth="2" />
    <g stroke={DOT} strokeLinecap="round" strokeLinejoin="round">
      <path d="M440 440L410 520 370 580 345 640 300 680" strokeWidth="26" />
      <path d="M790 525L745 600 725 650M690 700L665 760" strokeWidth="22" />
      {BARS.map(([a, b, c, d]) => {
        const dx = (c - a) / 487;
        const dy = (d - b) / 487;
        const lx = a + dx * 70;
        const ly = b + dy * 70;
        const rx = c - dx * 70;
        const ry = d - dy * 70;
        return (
          <g key={a} strokeWidth="14">
            <path d={`M${lx - 20} ${ly - 5}L${lx + 20} ${ly + 5}`} />
            <path d={`M${rx - 20} ${ry - 5}L${rx + 20} ${ry + 5}`} />
          </g>
        );
      })}
    </g>
    <g fill={DOT} stroke="none">
      {BARS.map(([a, b, c, d]) => (
        <g key={a}>
          <circle cx={a} cy={b} r="8" />
          <circle cx={c} cy={d} r="8" />
        </g>
      ))}
      {RAIL_DOTS.map(([x, y]) => <circle key={`${x}-${y}`} cx={x} cy={y} r="10" />)}
    </g>
  </g>
);

const TrailerFront = () => (
  <g transform="translate(590 220) scale(.3333)" fill="none" stroke="#000">
    {FRONT_BARS.map(([a, b, c, d], i) => (
      <path key={i} d={`M${a} ${b}L${c} ${d}`} strokeWidth="6" />
    ))}
    <g stroke={DOT} strokeLinecap="round">
      <path d="M945 525L825 755M1050 548L925 778" strokeWidth="6" />
      <path d="M890 625L860 680" strokeWidth="18" />
      <path d="M1005 640L960 705" strokeWidth="22" />
    </g>
    <g fill={DOT} stroke="none">
      {FRONT_DOTS.map(([x, y]) => <circle key={`${x}-${y}`} cx={x} cy={y} r="10" />)}
    </g>
  </g>
);

const TrailerSide = () => (
  <g transform="translate(590 220) scale(.3333)" fill="none" strokeLinecap="round">
    <path d="M1180 522L1492 782" stroke={DOT} strokeWidth="13" />
    <path d="M1262 592L1390 700" stroke={DOT} strokeWidth="32" />
    <path d="M1215 560L1222 566M1240 582L1252 592M1408 722L1422 734M1465 765L1472 771" stroke="#000" strokeWidth="11" strokeLinecap="butt" />
  </g>
);

const TrailerElevation = () => (
  <g transform="translate(550 620) scale(.4464 .3333)" fill="none" stroke="#e2e2e2" strokeWidth="3">
    <path d="M45 67H1470M45 67L570 145H955L1470 67" />
    <path d="M195 67v24M320 67v38M445 67v58M1080 67v58M1205 67v38M1330 67v24M445 67L570 145M1080 67L955 145M575 67v78M955 67v78" />
    <path d="M585 67h22v30h-22zM755 67h20v30h-20zM922 67h22v30h-22z" />
    {[667, 860].map((x) => (
      <g key={x}>
        <ellipse cx={x} cy="122" rx="60" ry="80" stroke="#ececec" />
        <ellipse cx={x} cy="122" rx="37" ry="50" stroke="#dcdcdc" />
        <ellipse cx={x} cy="122" rx="25" ry="33" stroke="#d8d8d8" />
        <ellipse cx={x} cy="122" rx="13" ry="18" stroke="#ccc" />
        <path d={`M${x - 62} 105Q${x} 165 ${x + 62} 105`} stroke="#d4d4d4" strokeWidth="4" />
      </g>
    ))}
    <path d="M740 100L764 140 788 100" strokeWidth="5" stroke="#dcdcdc" />
    <g fill="#111" stroke="none">
      {[302, 533, 764, 995, 1227].map((x) => <rect key={x} x={x - 3} y="40" width="6" height="11" />)}
      {[575, 765, 954].map((x) => <rect key={x} x={x - 6} y="142" width="12" height="6" />)}
    </g>
    <g fill="#fff" stroke="#111" strokeWidth="3">
      <rect x="37" y="42" width="6" height="18" />
      <rect x="1485" y="42" width="6" height="18" />
      <rect x="662" y="116" width="11" height="12" />
      <rect x="855" y="116" width="11" height="12" />
    </g>
  </g>
);

const FRAME_LABEL = { fontFamily: "Liberation Sans, sans-serif", fontSize: 12, fill: "#222", textAnchor: "middle" };

const Frame = ({ x, y, w, h, stroke = "#444" }) => (
  <rect x={x + 0.5} y={y + 0.5} width={w} height={h} fill="none" stroke={stroke} strokeDasharray="4 3" />
);

const Sheet = () => (
  <SheetPage viewBox="525 170 757 535">
    <TrailerElevation />
    <Frame x={604} y={230} w={341} h={370} />
    <TrailerPlan />
    <Frame x={858} y={391} w={88} h={105} />
    <TrailerFront />
    <Frame x={980} y={391} w={111} h={105} />
    <TrailerSide />
    <Frame x={566} y={633} w={650} h={67} stroke="#222" />
    <text x={775} y={600} style={FRAME_LABEL}>View</text>
    <text x={902} y={495} style={FRAME_LABEL}>Front</text>
    <text x={1035} y={495} style={FRAME_LABEL}>Left</text>
    <text x={891} y={699} style={FRAME_LABEL}>ArchView</text>
  </SheetPage>
);

// ---- consoles

const REPORT = [
  "App.getDocument('TRAILER').getObject('Sketch024').delConstraintOnPoint(0,3)",
  "4402.74 <App> Document.cpp(3715): Failed to recompute TRAILER#Sketch024: Sketch with redundant",
  "constraints",
  "Please remove the following redundant constraint:",
  "1",
  " ",
  "Recompute failed! Please check report view.",
  "4409.32 <App> Document.cpp(3715): Failed to recompute TRAILER#Sketch024: Sketch with redundant",
  "constraints",
  "Please remove the following redundant constraint:",
];

const getDoc = (val) => [
  ["", "FreeCAD"], ["p", "."], ["", "getDocument"], ["p", "("], ["s", "'TRAILER'"], ["p", ")."], ["", "getObject"], ["p", "("],
  ["s", "'ProjGroup'"], ["p", ")."], ["", "Scale "], ["p", "= "], ["n", val],
];

const PYTHON = [
  [["", "Gui"], ["p", "."], ["", "ActiveDocument"], ["p", "."], ["", "resetEdit"], ["p", "()"]],
  [["c", "# Gui.Selection.clearSelection()"]],
  [["c", "# Gui.Selection.addSelection('TRAILER','ProjGroup')"]],
  getDoc("0.00"),
  [],
  getDoc("0.01"),
  [],
  [["", "Gui"], ["p", "."], ["", "runCommand"], ["p", "("], ["s", "'TechDraw_ShowAll'"], ["p", ","], ["n", "0"], ["p", ")"]],
  [],
];

export default function App() {
  return (
    <Shell>
      <GlobalStyle />
      <TitleBar>
        <Icon name="logo" size={17} />
        <TitleText>FreeCAD 0.19</TitleText>
        <WinButtons>
          <WinButton>
            <svg width="11" height="11" viewBox="0 0 11 11"><path d="M0 5.500h10" stroke="#111" /></svg>
          </WinButton>
          <WinButton>
            <svg width="11" height="11" viewBox="0 0 11 11"><path d="M.5 2.500h7.500v8H.5zM2.500 2.500v-2h8v8H8" fill="none" stroke="#111" /></svg>
          </WinButton>
          <WinButton>
            <CloseX size={11} color="#111" weight={1} />
          </WinButton>
        </WinButtons>
      </TitleBar>
      <MenuBar>
        {["File", "Edit", "View", "Tools", "Macro", "TechDraw", "Windows", "Help"].map((m) => <span key={m}>{m}</span>)}
      </MenuBar>
      <Toolbar items={ROW_ONE} />
      <Toolbar items={ROW_TWO} />

      <TopRow>
        <LeftDock>
          <DockTitle margin="4px 14px 0 4px">Combo View</DockTitle>
          <TabStrip $h={30}>
            <SideTab $active $w={40}>Model</SideTab>
            <SideTab $w={44}>Tasks</SideTab>
          </TabStrip>
          <ModelTree />
          <SplitterH $h={22} $pad={142}><DashH $w={38} /></SplitterH>
          <PropertyTable />
          <TabStrip $bottom $h={27}>
            <SideTab $bottom $w={56}>View</SideTab>
            <SideTab $active $bottom $w={41}>Data</SideTab>
          </TabStrip>
          <LeftSplit><DashV /></LeftSplit>
        </LeftDock>

        <CenterColumn>
          <ViewRow>
            <Viewport><Sheet /></Viewport>
            <VScroll $w={13}>
              <Chevron dir="up" />
              <Thumb $top={192} $h={229} />
              <ScrollEnd><Chevron /></ScrollEnd>
            </VScroll>
          </ViewRow>
          <HScroll>
            <Chevron dir="left" />
            <HThumb />
            <ScrollEnd $side="left"><Chevron dir="right" /></ScrollEnd>
          </HScroll>
          <DocTabs>
            <DocTab $w={115} $left={6} $right={8}>
              <Icon name="logo" size={16} />
              <DocTabLabel $gap={9}>Start page</DocTabLabel>
              <DocTabClose><CloseX size={12} color="#aaa" /></DocTabClose>
            </DocTab>
            <DocTab $w={131} $left={6} $right={10}>
              <Icon name="logo" size={16} />
              <DocTabLabel $gap={9}>TRAILER : 1*</DocTabLabel>
              <DocTabClose><CloseX size={12} color="#aaa" /></DocTabClose>
            </DocTab>
            <DocTab $w={88} $left={2} $right={6} $active>
              <Icon name="pageTree" size={16} />
              <DocTabLabel $gap={9}>Page*</DocTabLabel>
              <DocTabClose><CloseX size={12} color="#aaa" /></DocTabClose>
            </DocTab>
          </DocTabs>
        </CenterColumn>

        <SplitterV $w={14} $top={327}><DashV /></SplitterV>

        <RightDock>
          <DockTitle margin="0" inset={76}>Selection view</DockTitle>
          <SearchRow>
            <SearchField>Search</SearchField>
            <svg width="18" height="14" viewBox="0 0 18 14" style={{ marginLeft: 4 }}>
              <path d="M1 7l5-6h11v12H6z" fill="#a8c8e8" stroke="#4a7fb8" strokeWidth="1.500" />
              <path d="M8 4l6 6M14 4l-6 6" stroke="#4a7fb8" strokeWidth="1.500" />
            </svg>
            <SearchCount>1</SearchCount>
          </SearchRow>
          <SelectionList>TRAILER#ProjGroup (ProjGroup)</SelectionList>
          <PickedRow><CheckBox />Picked object list</PickedRow>
        </RightDock>
      </TopRow>

      <SplitterH $h={14} $pad={941}><DashH $w={38} /></SplitterH>

      <BottomRow>
        <BottomDock $w={653}>
          <DockTitle margin="0 0 0 4px" inset={44}>Report view</DockTitle>
          <Panel $h={159} $margin="5px 0 0 1px">
            <ConsoleText $pad="0 4px" $color="#f00">
              {REPORT.map((l, i) => <ConsoleLine key={i}>{l}</ConsoleLine>)}
            </ConsoleText>
            <VScroll $w={20}>
              <Chevron dir="up" />
              <Thumb $top={6} $h={6} $w={7} $square />
              <ScrollEnd><Chevron /></ScrollEnd>
            </VScroll>
          </Panel>
        </BottomDock>
        <SplitterV $w={14} $top={72}><DashV /></SplitterV>
        <BottomDock $w={1249}>
          <DockTitle>Python console</DockTitle>
          <Panel $h={153} $margin="8px 0 0 0">
            <ConsoleText $pad="0 5px">
              {PYTHON.map((line, i) => (
                <ConsoleLine key={i}>
                  <Prompt>&gt;&gt;&gt;</Prompt>
                  {line.map(([t, s], j) => <Tok key={j} $t={t}>{s}</Tok>)}
                </ConsoleLine>
              ))}
            </ConsoleText>
            <VScroll $w={18}>
              <Chevron dir="up" />
              <ScrollEnd><Thumb $top={0} $h={5} $w={7} $square /></ScrollEnd>
              <Chevron />
            </VScroll>
          </Panel>
        </BottomDock>
      </BottomRow>

      <StatusBar>
        Valid, Internal name: ProjGroup
        <StatusCell>
          <NavButton>
            <svg width="12" height="15" viewBox="0 0 12 15">
              <rect x="1.500" y="1" width="9" height="13" rx="4" fill="#fff" stroke="#333" strokeWidth="1.500" />
              <path d="M6 1v5" stroke="#333" strokeWidth="1.500" />
            </svg>
            Blender
          </NavButton>
        </StatusCell>
      </StatusBar>
    </Shell>
  );
}
